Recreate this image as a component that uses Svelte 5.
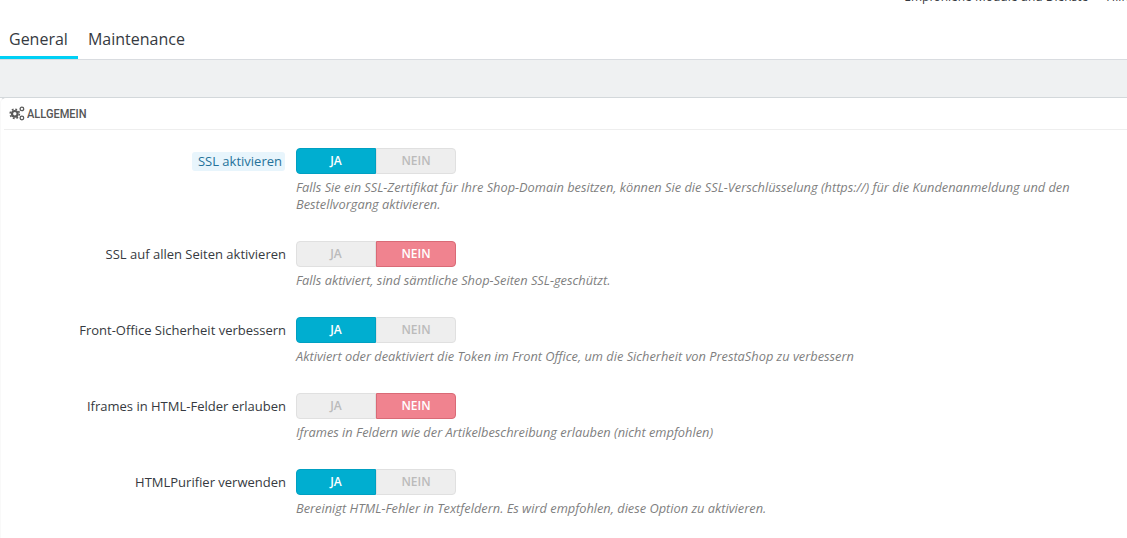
<script lang="ts">
    const rows = [
        {
            label: 'SSL aktivieren',
            on: true,
            active: true,
            help: 'Falls Sie ein SSL-Zertifikat für Ihre Shop-Domain besitzen, können Sie die SSL-Verschlüsselung (https://) für die Kundenanmeldung und den Bestellvorgang aktivieren.'
        },
        {
            label: 'SSL auf allen Seiten aktivieren',
            on: false,
            help: 'Falls aktiviert, sind sämtliche Shop-Seiten SSL-geschützt.'
        },
        {
            label: 'Front-Office Sicherheit verbessern',
            on: true,
            help: 'Aktiviert oder deaktiviert die Token im Front Office, um die Sicherheit von PrestaShop zu verbessern'
        },
        {
            label: 'Iframes in HTML-Felder erlauben',
            on: false,
            help: 'Iframes in Feldern wie der Artikelbeschreibung erlauben (nicht empfohlen)'
        },
        {
            label: 'HTMLPurifier verwenden',
            on: true,
            help: 'Bereinigt HTML-Fehler in Textfeldern. Es wird empfohlen, diese Option zu aktivieren.'
        }
    ];
</script>

<div class="page">
    <div class="top-links">
        <span>Empfohlene Module und Dienste</span>
        <span>Hilfe</span>
    </div>

    <nav class="tabs">
        <span class="tab tab--active">General</span>
        <span class="tab">Maintenance</span>
    </nav>

    <div class="band"></div>

    <section class="panel">
        <h3 class="panel__heading">
            <svg class="panel__icon" viewBox="0 0 16 15" width="16" height="15" aria-hidden="true">
                <g fill="none" stroke="#5a5a5a">
                    <circle cx="5.8" cy="7.8" r="4.6" stroke-width="1.6" stroke-dasharray="1.8 1.81"/>
                    <circle cx="5.8" cy="7.8" r="2.8" stroke-width="2.2"/>
                    <circle cx="12.9" cy="2.9" r="1.8" stroke-width="1.3"/>
                    <circle cx="12.9" cy="12" r="1.8" stroke-width="1.3"/>
                </g>
            </svg>
            <span class="panel__title">ALLGEMEIN</span>
        </h3>

        <div class="form">
            {#each rows as row}
                <div class="row">
                    <div class="row__label">
                        <span class:chip={row.active}>{row.label}</span>
                    </div>
                    <div class="row__control">
                        <div class="switch">
                            <span class="switch__side" class:switch__side--yes={row.on}>JA</span>
                            <span class="switch__side" class:switch__side--no={!row.on}>NEIN</span>
                        </div>
                        <p class="help">{row.help}</p>
                    </div>
                </div>
            {/each}
        </div>
    </section>
</div>

<style>
    :global(body) {
        background: #fff;
    }

    .page {
        height: 538px;
        overflow: hidden;
        font-family: "Open Sans", sans-serif;
        color: #363a41;
    }

    .top-links {
        height: 12px;
        margin-top: -11px;
        margin-right: -5px;
        padding-bottom: 21px;
        display: flex;
        justify-content: flex-end;
        gap: 18px;
        font-size: 12px;
        line-height: 16px;
    }

    .tabs {
        display: flex;
        height: 37px;
        border-bottom: 1px solid #d9dce0;
    }

    .tab {
        padding: 7px 10px 0 10px;
        font-size: 16px;
        line-height: 21px;
        box-sizing: border-box;
        height: 37px;
    }

    .tab:first-child {
        padding-left: 9px;
    }

    .tab--active {
        border-bottom: 3px solid #00d0f5;
    }

    .band {
        height: 37px;
        background: #eff1f2;
        border-bottom: 1px solid #d3d8db;
    }

    .panel {
        height: 442px;
        border-radius: 6px 0 0 0;
        margin-top: -1px;
        border-top: 1px solid #d3d8db;
        border-left: 1px solid #f9f9f9;
        background: #fff;
    }

    .panel__heading {
        margin: 0 0 0 3px;
        height: 31px;
        display: flex;
        align-items: center;
        gap: 2px;
        padding-left: 5px;
        border-bottom: 1px solid #eee;
        font-size: 13px;
        font-weight: 400;
        color: #555;
    }

    .panel__icon {
        flex: none;
    }

    .panel__title {
        display: inline-block;
        font-family: "Roboto", sans-serif;
        font-weight: 500;
        transform: scaleX(0.85);
        transform-origin: left center;
    }

    .form {
        padding-top: 18px;
    }

    .row {
        display: flex;
        margin-bottom: 28px;
    }

    .row__label {
        width: 285px;
        height: 26px;
        flex: none;
        text-align: right;
        font-size: 13px;
        line-height: 26px;
    }

    .chip {
        display: inline-block;
        margin-right: 1px;
        height: 19px;
        line-height: 19px;
        padding: 0 3px 0 6px;
        border-radius: 3px;
        background: #e8f5fc;
        color: #25729a;
    }

    .row__control {
        margin-left: 10px;
        flex: 1;
    }

    .switch {
        display: flex;
        width: 160px;
        height: 26px;
    }

    .switch__side {
        box-sizing: border-box;
        width: 80px;
        border: 1px solid #e0e0e0;
        background: #eee;
        color: #bbb;
        font-size: 12px;
        font-weight: 600;
        line-height: 24px;
        text-align: center;
    }

    .switch__side:first-child {
        border-radius: 4px 0 0 4px;
    }

    .switch__side:last-child {
        border-radius: 0 4px 4px 0;
    }

    .switch__side--yes {
        background: #00aed0;
        border-color: #00a0c2;
        color: #fff;
    }

    .switch__side--no {
        background: #f0838f;
        border-color: #d96a76;
        color: #fff;
    }

    .help {
        margin: 5px 0 0;
        width: 790px;
        font-size: 12.8px;
        line-height: 17px;
        font-style: italic;
        color: #7f7f7f;
    }
</style>
